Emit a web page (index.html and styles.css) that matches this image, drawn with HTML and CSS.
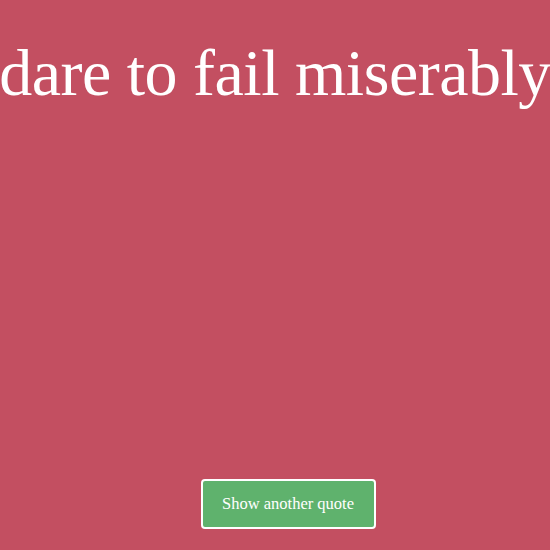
FILE: index.html
```html
<!DOCTYPE html>
<html>
<head>
<meta charset="utf-8">
<link rel="stylesheet" href="styles.css">
</head>
<body>
<main class="page">
  <h1 class="quote">dare to fail miserably</h1>
  <button class="next-btn">Show another quote</button>
</main>
</body>
</html>
```
FILE: styles.css
```css
html, body {
  margin: 0;
  padding: 0;
  background: #c34f61;
  overflow: hidden;
}
.page {
  height: 550px;
  display: flex;
  flex-direction: column;
  align-items: center;
  justify-content: space-between;
  font-family: "Liberation Serif", "DejaVu Serif", serif;
  color: #ffffff;
}
.quote {
  margin: 0;
  padding-top: 33px;
  font-weight: 400;
  font-size: 66px;
  line-height: 80px;
  letter-spacing: -0.5px;
  white-space: nowrap;
  text-align: center;
}
.next-btn {
  margin-bottom: 21px;
  margin-left: 26px;
  width: 175px;
  height: 50px;
  background: #5fb26d;
  border: 2px solid #ffffff;
  border-radius: 4px;
  color: #ffffff;
  font-family: "Liberation Serif", "DejaVu Serif", serif;
  font-size: 16.5px;
}
```
